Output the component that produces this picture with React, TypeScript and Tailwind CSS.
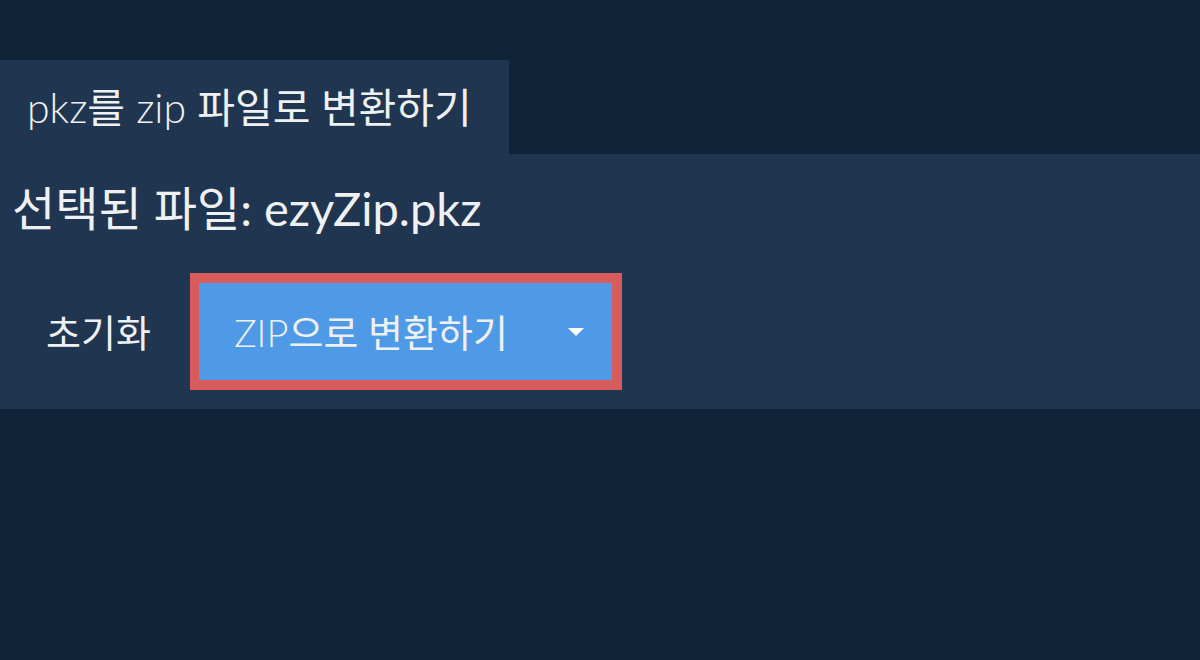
export default function App() {
  const font = { fontFamily: "Lato, 'Noto Sans CJK KR', sans-serif" }

  return (
    <div className="w-[1200px] h-[660px] bg-[#0f2339] pt-[60px] text-[#eef0f2]" style={font}>
      <div className="w-[509px] h-[94px] bg-[#203550] flex items-center pl-[27px]">
        <h1 className="text-[41px] font-light leading-none">
          pkz<span className="font-normal">를</span> zip <span className="font-normal">파일로 변환하기</span>
        </h1>
      </div>
      <div className="bg-[#203550] h-[255px] pt-[28px]">
        <p className="pl-[12px] text-[47px] leading-[52px]">선택된 파일: ezyZip.pkz</p>
        <div className="flex items-center mt-[39px]">
          <button className="ml-[46px] text-[38px] leading-none">초기화</button>
          <div className="ml-[39px] border-[10px] border-l-[9px] border-[#d95c5c]">
            <button className="w-[413px] h-[97px] bg-[#4e9ae6] flex items-center pl-[35px] pr-[28px] justify-between">
              <span className="text-[38px] font-light leading-none">
                ZIP<span className="font-normal">으로 변환하기</span>
              </span>
              <svg width="16" height="8" viewBox="0 0 16 8">
                <path d="M0 0h16L8 8z" fill="#fff" />
              </svg>
            </button>
          </div>
        </div>
      </div>
    </div>
  )
}
